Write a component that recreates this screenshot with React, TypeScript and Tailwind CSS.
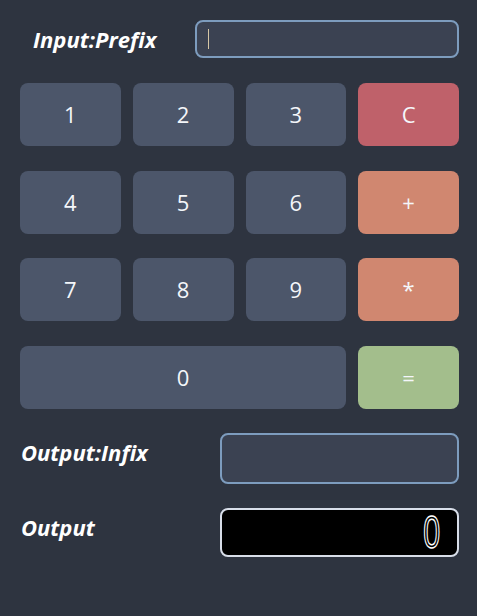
export default function App() {
  const keys = [
    { label: '1', color: 'bg-[#4c566a]' },
    { label: '2', color: 'bg-[#4c566a]' },
    { label: '3', color: 'bg-[#4c566a]' },
    { label: 'C', color: 'bg-[#bf616a]' },
    { label: '4', color: 'bg-[#4c566a]' },
    { label: '5', color: 'bg-[#4c566a]' },
    { label: '6', color: 'bg-[#4c566a]' },
    { label: '+', color: 'bg-[#d08770]' },
    { label: '7', color: 'bg-[#4c566a]' },
    { label: '8', color: 'bg-[#4c566a]' },
    { label: '9', color: 'bg-[#4c566a]' },
    { label: '*', color: 'bg-[#d08770]' },
  ];

  return (
    <div className="min-h-screen bg-[#2e3440] text-[#eceff4] font-['Open_Sans',sans-serif] pl-5 pr-[18px] pt-5">
      {/* Prefix input */}
      <div className="flex items-center">
        <span className="w-[175px] pl-[13px] text-[22px] leading-none font-bold italic text-white">Input:Prefix</span>
        <div className="flex-1 h-[38px] rounded-lg border-2 border-[#7d9cbe] bg-[#3b4252] flex items-center pl-[11px]">
          <span className="w-px h-[20px] bg-[#d6c7a6]"></span>
        </div>
      </div>

      {/* Keypad */}
      <div className="grid grid-cols-4 gap-x-3 gap-y-[24.5px] mt-[25px]">
        {keys.map((k) => (
          <button key={k.label} className={`${k.color} h-[63px] rounded-lg text-[22px] text-[#f4f6fa]`}>
            {k.label}
          </button>
        ))}
        <button className="col-span-3 bg-[#4c566a] h-[63px] rounded-lg text-[22px] text-[#f4f6fa]">0</button>
        <button className="bg-[#a3be8c] h-[63px] rounded-lg text-[22px] text-[#f4f6fa]">=</button>
      </div>

      {/* Outputs */}
      <div className="flex items-start mt-[24px]">
        <span className="w-[200px] pl-px pt-[8px] text-[22px] leading-none font-bold italic text-white">Output:Infix</span>
        <div className="flex-1 h-[51px] rounded-lg border-2 border-[#7d9cbe] bg-[#3b4252]"></div>
      </div>
      <div className="flex items-start mt-6">
        <span className="w-[200px] pl-px pt-[8px] text-[22px] leading-none font-bold italic text-white">Output</span>
        <div className="flex-1 h-[49px] rounded-lg border-2 border-[#d8dee9] bg-black flex items-center justify-end pr-[12px]">
          <span className="font-['Liberation_Sans',sans-serif] text-[46px] leading-none text-transparent [-webkit-text-stroke:1.5px_#ffffff] scale-x-[0.66]">0</span>
        </div>
      </div>
    </div>
  );
}
